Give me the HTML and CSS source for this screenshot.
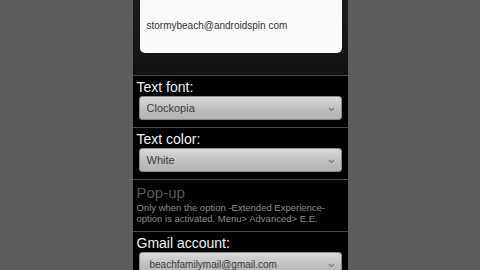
FILE: index.html
```html
<!DOCTYPE html>
<html lang="en">
<head>
    <meta charset="UTF-8">
    <meta name="viewport" content="width=device-width, initial-scale=1.0">
    <title>Settings</title>
    <link rel="stylesheet" href="styles.css">
</head>
<body>
    <div class="screen">
        <div class="top-area">
            <div class="account-card">
                <div class="card-text">stormybeach@androidspin com</div>
            </div>
        </div>
        <div class="setting">
            <div class="label">Text font:</div>
            <div class="select">
                <span>Clockopia</span>
                <svg class="chevron" width="7" height="5" viewBox="0 0 7 5"><path d="M1 1 L3.5 3.5 L6 1" fill="none" stroke="#7a7a7a" stroke-width="1.2"/></svg>
            </div>
        </div>
        <div class="setting">
            <div class="label">Text color:</div>
            <div class="select">
                <span>White</span>
                <svg class="chevron" width="7" height="5" viewBox="0 0 7 5"><path d="M1 1 L3.5 3.5 L6 1" fill="none" stroke="#7a7a7a" stroke-width="1.2"/></svg>
            </div>
        </div>
        <div class="setting disabled">
            <div class="label big">Pop-up</div>
            <div class="desc">Only when the option -Extended Experience-<br>option is activated. Menu&gt; Advanced&gt; E.E.</div>
        </div>
        <div class="setting">
            <div class="label">Gmail account:</div>
            <div class="select">
                <span class="pad">beachfamilymail@gmail.com</span>
                <svg class="chevron" width="7" height="5" viewBox="0 0 7 5"><path d="M1 1 L3.5 3.5 L6 1" fill="none" stroke="#7a7a7a" stroke-width="1.2"/></svg>
            </div>
        </div>
    </div>
</body>
</html>
```

FILE: styles.css
```css
body { margin: 0; background: #5d5d5d; font-family: "Liberation Sans", Arial, sans-serif; height: 270px; overflow: hidden; }
.screen { width: 215px; margin: 0 auto; background: #000; height: 270px; overflow: hidden; }
.top-area { height: 75px; background: linear-gradient(#1c1c1c, #111); padding: 0 6px 0 7px; border-bottom: 1px solid #4a4a4a; }
.account-card { height: 53px; background: #fafafa; border-radius: 0 0 5px 5px; padding-left: 7px; overflow: hidden; }
.card-text { font-size: 10px; color: #333; line-height: 12px; margin-top: 20px; }
.setting { padding: 3px 6px 7px 6px; border-bottom: 1px solid #4a4a4a; }
.label { color: #f2f2f2; font-size: 14px; line-height: 16px; margin-left: -2px; }
.select { height: 22px; margin-top: 1px; border: 1px solid #8a8a8a; border-radius: 3px; background: linear-gradient(#d9d9d9, #bdbdbd 60%, #b3b3b3); display: flex; align-items: center; justify-content: space-between; padding: 0 6px 0 7px; }
.select span { font-size: 11px; color: #3a3a3a; }
.select .pad { padding-left: 3px; font-size: 10px; }
.chevron { margin-top: 2px; }
.disabled { padding-bottom: 7px; }
.disabled .label { color: #5a5a5a; }
.big { font-size: 15px; line-height: 20px; }
.desc { font-size: 9.5px; line-height: 10.5px; color: #8c8c8c; margin-left: -2px; }
```
